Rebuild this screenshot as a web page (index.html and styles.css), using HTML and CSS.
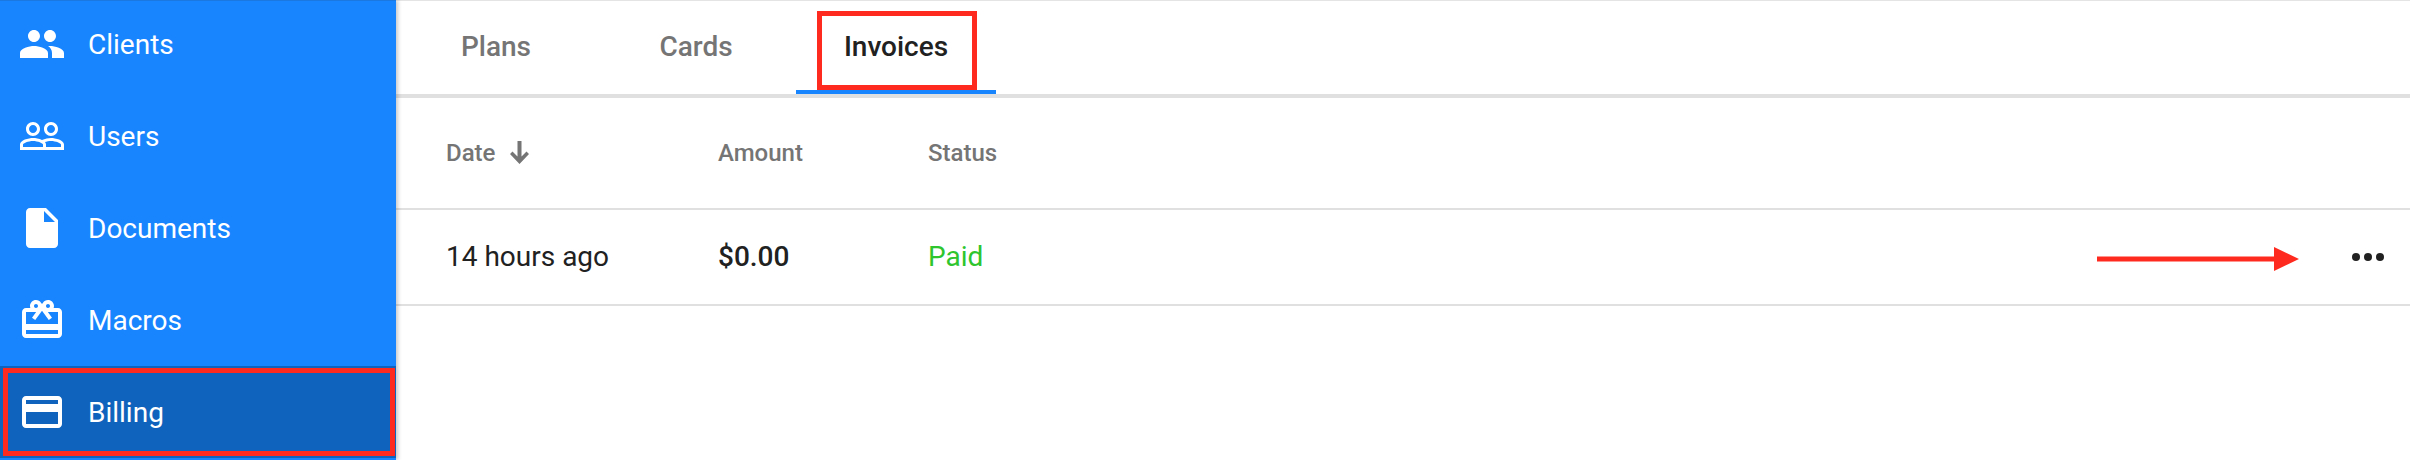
FILE: index.html
```html
<!DOCTYPE html>
<html lang="en">
<head>
<meta charset="utf-8">
<title>Billing - Invoices</title>
<link rel="stylesheet" href="styles.css">
</head>
<body>
<div class="app">
  <aside class="sidebar">
    <nav class="menu">
      <a class="menu-item"><svg class="menu-icon" viewBox="0 0 24 24"><path d="M16 11c1.66 0 2.99-1.34 2.99-3S17.66 5 16 5c-1.66 0-3 1.34-3 3s1.34 3 3 3zm-8 0c1.66 0 2.99-1.34 2.99-3S9.66 5 8 5C6.34 5 5 6.34 5 8s1.34 3 3 3zm0 2c-2.33 0-7 1.17-7 3.5V19h14v-2.5c0-2.33-4.67-3.5-7-3.5zm8 0c-.29 0-.62.02-.97.05 1.16.84 1.97 1.97 1.97 3.45V19h6v-2.5c0-2.33-4.67-3.5-7-3.5z"/></svg><span>Clients</span></a>
      <a class="menu-item"><svg class="menu-icon" viewBox="0 0 24 24"><path d="M16.5 13c-1.2 0-3.07.34-4.5 1-1.43-.67-3.3-1-4.5-1C5.33 13 1 14.08 1 16.25V19h22v-2.75c0-2.17-4.33-3.25-6.5-3.25zm-4 4.5h-10v-1.25c0-.54 2.56-1.75 5-1.75s5 1.21 5 1.75v1.25zm9 0H14v-1.25c0-.46-.2-.86-.52-1.22.88-.3 1.96-.53 3.02-.53 2.44 0 5 1.21 5 1.75v1.25zM7.5 12c1.93 0 3.5-1.57 3.5-3.5S9.43 5 7.5 5 4 6.57 4 8.5 5.57 12 7.5 12zm0-5.5c1.1 0 2 .9 2 2s-.9 2-2 2-2-.9-2-2 .9-2 2-2zm9 5.5c1.93 0 3.5-1.57 3.5-3.5S18.43 5 16.5 5 13 6.57 13 8.5s1.57 3.5 3.5 3.5zm0-5.5c1.1 0 2 .9 2 2s-.9 2-2 2-2-.9-2-2 .9-2 2-2z"/></svg><span>Users</span></a>
      <a class="menu-item"><svg class="menu-icon" viewBox="0 0 24 24"><path d="M6 2c-1.1 0-1.99.9-1.99 2L4 20c0 1.1.89 2 1.99 2H18c1.1 0 2-.9 2-2V8l-6-6H6zm7 7V3.5L18.5 9H13z"/></svg><span>Documents</span></a>
      <a class="menu-item"><svg class="menu-icon" viewBox="0 0 24 24"><path d="M20 6h-2.18c.11-.31.18-.65.18-1 0-1.66-1.34-3-3-3-1.05 0-1.96.54-2.5 1.35l-.5.67-.5-.68C10.96 2.54 10.05 2 9 2 7.34 2 6 3.34 6 5c0 .35.07.69.18 1H4c-1.11 0-1.99.89-1.99 2L2 19c0 1.11.89 2 2 2h16c1.11 0 2-.89 2-2V8c0-1.11-.89-2-2-2zm-5-2c.55 0 1 .45 1 1s-.45 1-1 1-1-.45-1-1 .45-1 1-1zM9 4c.55 0 1 .45 1 1s-.45 1-1 1-1-.45-1-1 .45-1 1-1zm11 15H4v-2h16v2zm0-5H4V8h5.08L7 10.83 8.62 12 11 8.76l1-1.36 1 1.36L15.38 12 17 10.83 14.92 8H20v6z"/></svg><span>Macros</span></a>
      <a class="menu-item menu-item-active"><svg class="menu-icon" viewBox="0 0 24 24"><path d="M20 4H4c-1.11 0-1.99.89-1.99 2L2 18c0 1.11.89 2 2 2h16c1.11 0 2-.89 2-2V6c0-1.11-.89-2-2-2zm0 14H4v-6h16v6zm0-10H4V6h16v2z"/></svg><span>Billing</span><i class="callout callout-menu"></i></a>
    </nav>
  </aside>
  <main class="content">
    <div class="tabs">
      <a class="tab">Plans</a>
      <a class="tab">Cards</a>
      <a class="tab tab-active">Invoices<i class="callout callout-tab"></i></a>
    </div>
    <div class="row row-head">
      <div class="col-date">Date<svg class="sort-icon" viewBox="0 0 19 23"><path d="M7.5 0h4v15.6l5-5L19 13.100 9.500 23 0 13.100l2.500-2.500 5 5z"/></svg></div>
      <div class="col-amount">Amount</div>
      <div class="col-status">Status</div>
    </div>
    <div class="row row-body">
      <div class="col-date">14 hours ago</div>
      <div class="col-amount amount">$0.00</div>
      <div class="col-status paid">Paid</div>
      <div class="row-actions">
        <svg class="callout-arrow" viewBox="0 0 202 24"><path d="M0 9.500h177V0l25 12-25 12v-9.500H0z"/></svg>
        <span class="kebab"><i></i><i></i><i></i></span>
      </div>
    </div>
  </main>
</div>
</body>
</html>
```
FILE: styles.css
```css
* { box-sizing: border-box; }
html, body { margin: 0; height: 100%; background: #fff; overflow: hidden; }
body { font-family: Roboto, "Liberation Sans", sans-serif; color: #212121; }
.app { display: flex; height: 460px; }

.sidebar {
  position: relative;
  z-index: 1;
  flex: 0 0 396px;
  background: #1885ff;
  border-top: 1px solid #1a78e0;
  box-shadow: 2px 0 4px rgba(0, 0, 0, .22);
  overflow: hidden;
}
.menu { display: flex; flex-direction: column; margin-top: -3px; }
.menu-item {
  position: relative;
  display: flex;
  align-items: center;
  flex: 0 0 92px;
  padding-left: 18px;
  color: #fff;
  font-size: 28px;
}
.menu-item-active { background: #1063bc; }
.menu-icon { width: 48px; height: 48px; margin-right: 22px; fill: #fff; flex: none; }

.content { flex: 1; min-width: 0; border-top: 1px solid #e4e4e4; }
.tabs {
  display: flex;
  height: 97px;
  border-bottom: 4px solid #e0e0e0;
}
.tab {
  position: relative;
  flex: 0 0 200px;
  height: 93px;
  padding-top: 26px;
  text-align: center;
  color: #757575;
  font-size: 28px;
  font-weight: 500;
  line-height: 40px;
}
.tab-active { color: #212121; border-bottom: 4px solid #1885ff; }

.row {
  display: flex;
  align-items: center;
  padding-left: 50px;
  border-bottom: 2px solid #e0e0e0;
}
.row-head { height: 112px; padding-bottom: 1px; color: #757575; font-size: 24px; font-weight: 500; }
.row-body { height: 96px; padding-bottom: 2px; font-size: 28px; }
.col-date { flex: 0 0 272px; display: flex; align-items: center; }
.col-amount { flex: 0 0 210px; }
.col-status { flex: 0 0 auto; }
.sort-icon { width: 19px; height: 23px; margin-left: 15px; fill: #757575; }
.amount { font-weight: 500; }
.paid { color: #2ec52e; }

.row-actions { margin-left: auto; display: flex; align-items: center; padding-right: 26px; }
.kebab { display: flex; gap: 4px; margin-top: 2px; }
.kebab i { width: 8px; height: 8px; border-radius: 50%; background: #212121; }

.callout { position: absolute; border: 5px solid #ff2a1f; pointer-events: none; }
.callout-menu { left: 3px; right: 1px; top: 2px; bottom: 2px; }
.callout-tab { left: 21px; right: 19px; top: 10px; bottom: 0; }
.callout-arrow { width: 202px; height: 24px; margin-top: 6px; margin-right: 53px; fill: #ff2a1f; }
```
